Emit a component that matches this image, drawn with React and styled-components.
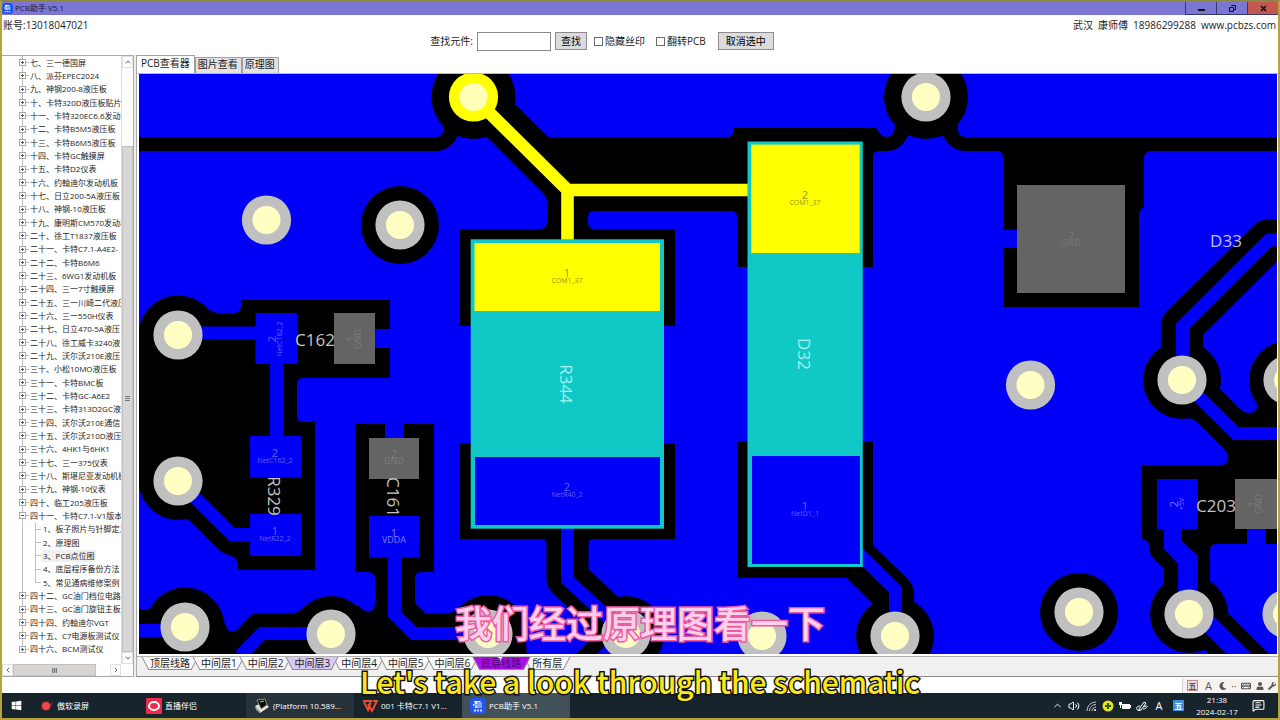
import React, { useState } from 'react'
import styled, { createGlobalStyle, css } from 'styled-components'
import { FaWindows, FaMoon, FaWrench, FaUser, FaKeyboard } from 'react-icons/fa'
import { ChevronUp, ChevronDown, ChevronLeft, ChevronRight, Volume2, MessageSquareText } from 'lucide-react'

const GlobalStyle = createGlobalStyle`
    * { box-sizing: border-box; }
    html, body, #root { height: 100%; margin: 0; }
    body {
        overflow: hidden;
        color: #1c1c1c;
        font-family: "Open Sans", "Noto Sans CJK SC", sans-serif;
        font-size: 10px;
    }
    button, input { font: inherit; color: inherit; }
    button { padding: 0; cursor: pointer; }
`

const Frame = styled.div`
    position: relative;
    height: 100vh;
    display: flex;
    flex-direction: column;
    background: #fff;
    border: 2px solid #b5a43e;
    border-top-color: #8f8644;
`

/* ---------- title bar and header ---------- */

const TitleBar = styled.header`
    display: flex;
    align-items: center;
    height: 13px;
    background: #7a76d2;
    font-size: 8px;
    line-height: 12px;
    color: #1a1838;
`
const AppTitle = styled.h1`
    flex: 1;
    margin: 0 0 0 2px;
    font-size: 8px;
    font-weight: 400;
    line-height: 10px;
    padding-bottom: 2px;
`
const WindowButton = styled.button`
    display: grid;
    place-items: center;
    width: 31px;
    height: 13px;
    border: 0;
    border-left: 1px solid #39366e;
    border-bottom: 1px solid #39366e;
    background: ${(p) => (p.$close ? '#c4574e' : '#7a76d2')};
`
const Header = styled.div`
    height: 40px;
    padding-top: 2px;
`
const InfoRow = styled.div`
    display: flex;
    justify-content: space-between;
    padding: 0 2px 0 1px;
    line-height: 16px;
    white-space: pre;
`
const Contact = styled.span`
    display: flex;
    gap: 5px;
`
const SearchRow = styled.form`
    display: flex;
    justify-content: center;
    align-items: center;
    height: 16px;
    padding-right: 76px;
    line-height: 14px;
`
const SearchInput = styled.input`
    width: 74px;
    height: 19px;
    margin: 0 4px;
    border: 1px solid #8a8a8a;
    background: #fff;
`
const PushButton = styled.button`
    height: 18px;
    padding: 0 ${(p) => p.$pad}px;
    border: 1px solid #8c8c8c;
    background: #dcdcdc;
    line-height: 14px;
    color: #000;
    margin-left: ${(p) => p.$space || 0}px;
`
const CheckLabel = styled.label`
    display: flex;
    align-items: center;
    gap: 2px;
    margin-left: ${(p) => p.$space}px;
    input {
        appearance: none;
        width: 9px;
        height: 9px;
        margin: 0;
        border: 1px solid #6a6a6a;
        background: #fff;
    }
    input:checked { background: #555; }
`

/* ---------- tree ---------- */

const Main = styled.main`
    flex: 1;
    min-height: 0;
    display: flex;
    gap: 2px;
    background: #eee;
`
const TreePanel = styled.nav`
    width: 132px;
    flex: none;
    display: grid;
    grid-template-columns: minmax(0, 1fr) 12px;
    grid-template-rows: minmax(0, 1fr) 12px;
    border: 1px solid #a9a9a9;
    border-left: 0;
    background: #fff;
`
const TreeList = styled.ul`
    display: grid;
    grid-auto-rows: minmax(0, 1fr);
    margin: 0;
    padding: 0 0 8px;
    list-style: none;
    overflow: hidden;
    font-size: 8px;
    white-space: nowrap;
`
const TreeRow = styled.li`
    display: flex;
    align-items: center;
    line-height: 12px;
`
const Rail = styled.span`
    display: flex;
    align-items: center;
    align-self: stretch;
    flex: none;
    width: 28px;
    padding-left: 17px;
    background: linear-gradient(#c0c0c0, #c0c0c0) 20px 0 / 1px ${(p) => (p.$last ? '50%' : '100%')} no-repeat;
    &::after {
        content: '';
        width: 3px;
        border-top: 1px ${(p) => (p.$bare ? 'none' : 'solid')} #c0c0c0;
    }
`
const Toggle = styled.button`
    position: relative;
    width: 7px;
    height: 7px;
    border: 1px solid #a8a8a8;
    background: #fff;
    &::before, &::after {
        content: '';
        position: absolute;
        inset: 2px 1px;
        background: #555;
    }
    &::after {
        inset: 1px 2px;
        display: ${(p) => (p.$open ? 'none' : 'block')};
    }
`
const SubRail = styled.span`
    display: flex;
    align-items: center;
    align-self: stretch;
    flex: none;
    width: 12px;
    padding-left: 5px;
    background: linear-gradient(#c0c0c0, #c0c0c0) 5px 0 / 1px ${(p) => (p.$last ? '50%' : '100%')} no-repeat;
    &::after {
        content: '';
        width: 6px;
        border-top: 1px solid #c0c0c0;
    }
`
const NodeName = styled.span`
    padding: 0 1px 0 ${(p) => (p.$sub ? 1 : 0)}px;
    background: ${(p) => (p.$selected ? '#f0f0f0' : 'none')};
`
const ScrollColumn = styled.div`
    display: flex;
    flex-direction: column;
    border-left: 1px solid #ddd;
`
const ScrollLine = styled.div`
    display: flex;
`
const ArrowButton = styled.button`
    display: grid;
    place-items: center;
    flex: none;
    width: 11px;
    height: 12px;
    border: 1px solid #e0e0e0;
    background: #fdfdfd;
`
const Track = styled.div`
    flex: ${(p) => p.$grow};
    background: #fdfdfd;
`
const Thumb = styled.div`
    flex: ${(p) => p.$grow};
    display: grid;
    place-items: center;
    border: 1px solid #c2c0c0;
    background: #d8d5d5;
`
const Grip = styled.i`
    width: 5px;
    height: 5px;
    ${(p) =>
        p.$across
            ? css`background: repeating-linear-gradient(90deg, #777 0 1px, #b5b5b5 1px 2px);`
            : css`background: repeating-linear-gradient(#777 0 1px, #d8d5d5 1px 2px);`}
`

/* ---------- viewer ---------- */

const Viewer = styled.section`
    flex: 1;
    min-width: 0;
    display: flex;
    flex-direction: column;
    border-left: 1px solid #a9a9a9;
    border-bottom: 1px solid #8c8c8c;
    background: #fff;
`
const ViewTabs = styled.div`
    display: flex;
    align-items: flex-end;
    height: 18px;
`
const ViewTab = styled.button`
    height: ${(p) => (p.$active ? 18 : 16)}px;
    padding: ${(p) => (p.$active ? '0 4px 2px' : '0 3px 2px 2px')};
    border: 1px solid #a0a0a0;
    border-bottom: 0;
    border-left-width: ${(p) => (p.$active ? 0 : 1)}px;
    background: ${(p) => (p.$active ? '#fff' : '#e2e2e2')};
    line-height: 13px;
`
const BoardArea = styled.div`
    flex: 1;
    min-height: 0;
    border-top: 1px solid #b8b8b8;
    padding: 0 1px 0 2px;
`
const BoardSvg = styled.svg`
    display: block;
    width: 100%;
    height: 100%;
    background: #0000f8;
    font-family: "Open Sans", "Noto Sans", sans-serif;
`
const LayerBar = styled.div`
    display: flex;
    align-items: flex-start;
    height: 20px;
    margin-top: 2px;
    padding-left: 5px;
    border-top: 1px solid #b0b0b0;
    background: #f1f0f1;
`
const LayerTab = styled.button`
    position: relative;
    z-index: ${(p) => (p.$color ? 1 : 0)};
    height: 13px;
    padding: 0 8px;
    border: 0;
    background: none;
    line-height: 13px;
    white-space: nowrap;
    color: ${(p) => p.$ink || '#1c1c1c'};
    & + & { margin-left: -5px; }
    &::before, &::after {
        content: '';
        position: absolute;
        z-index: -1;
        top: 0;
        bottom: 0;
        border-bottom: 1px solid #8a8a8a;
        background: ${(p) => p.$color || '#f8f8f8'};
    }
    &::before {
        left: 3px;
        right: 50%;
        border-left: 1px solid #8a8a8a;
        transform: skewX(28deg);
    }
    &::after {
        left: 45%;
        right: 3px;
        border-right: 1px solid #8a8a8a;
        transform: skewX(-28deg);
    }
`

/* ---------- bottom strip and taskbar ---------- */

const BottomStrip = styled.div`
    display: flex;
    justify-content: flex-end;
    height: 16px;
    padding-top: 1px;
`
const ImeBar = styled.div`
    display: flex;
    align-items: center;
    justify-content: space-between;
    width: 96px;
    padding: 0 2px 0 4px;
    border-left: 1px solid #d6d0d0;
    background: #f6f3f3;
    color: #5a5656;
`
const ImeMode = styled.span`
    width: 11px;
    height: 11px;
    border: 1px solid #c08a8a;
    background: #efd9d9;
    font-size: 8px;
    font-weight: 700;
    line-height: 9px;
    text-align: center;
`
const Taskbar = styled.footer`
    display: flex;
    align-items: stretch;
    height: 25px;
    background: #18242b;
    color: #fff;
    font-size: 8px;
`
const StartButton = styled.button`
    display: grid;
    place-items: center;
    width: 28px;
    border: 0;
    background: none;
    color: #fff;
`
const TaskButton = styled.button`
    display: flex;
    align-items: center;
    gap: 3px;
    width: 108px;
    padding-left: 8px;
    border: 0;
    background: ${(p) => p.$bg || 'none'};
    color: #fff;
    white-space: nowrap;
`
const Tray = styled.div`
    display: flex;
    align-items: center;
    gap: 5px;
    margin-left: auto;
    padding-right: 13px;
`
const Clock = styled.time`
    width: 48px;
    margin: 0 6px 0 4px;
    text-align: center;
    line-height: 12px;
`
const InputBadge = styled.span`
    width: 11px;
    height: 11px;
    margin-left: 3px;
    background: #3e90e0;
    line-height: 11px;
    text-align: center;
    font-weight: 700;
`
const LetterA = styled.span`
    width: 12px;
    font-size: 11px;
    line-height: 12px;
    text-align: center;
`

/* subtitles float above the whole window */
const Captions = styled.div`
    position: absolute;
    right: 0;
    bottom: 15px;
    left: 0;
    text-align: center;
    pointer-events: none;
    font-family: "Noto Sans CJK SC", sans-serif;
`
const CaptionMain = styled.p`
    margin: 0 0 7px;
    font-size: 37px;
    font-weight: 500;
    line-height: 60px;
    color: #ffd0ec;
    -webkit-text-stroke: 3px #ee5ba0;
    paint-order: stroke fill;
`
const CaptionSub = styled.p`
    margin: 0;
    font-size: 30px;
    font-weight: 500;
    line-height: 44px;
    color: #f8e71c;
    -webkit-text-stroke: 3px #111;
    paint-order: stroke fill;
`

const treeItems = [
  '七、三一德国屏',
  '八、派芬EPEC2024',
  '九、神钢200-8液压板',
  '十、卡特320D液压板贴片',
  '十一、卡特320EC6.6发动机',
  '十二、卡特B5M5液压板',
  '十三、卡特B6M5液压板',
  '十四、卡特GC触摸屏',
  '十五、卡特D2仪表',
  '十六、约翰迪尔发动机板',
  '十七、日立200-5A液压板',
  '十八、神钢-10液压板',
  '十九、康明斯CM570发动机',
  '二十、徐工T1837液压板',
  '二十一、卡特C7.1-A4E2-',
  '二十二、卡特B6M6',
  '二十三、6WG1发动机板',
  '二十四、三一7寸触摸屏',
  '二十五、三一川崎二代液压',
  '二十六、三一550H仪表',
  '二十七、日立470-5A液压',
  '二十八、徐工威卡3240液',
  '二十九、沃尔沃210E液压',
  '三十、小松10MO液压板',
  '三十一、卡特BMC板',
  '三十二、卡特GC-A6E2',
  '三十三、卡特313D2GC液',
  '三十四、沃尔沃210E通信',
  '三十五、沃尔沃210D液压',
  '三十六、4HK1与6HK1',
  '三十七、三一375仪表',
  '三十八、斯堪尼亚发动机板',
  '三十九、神钢-10仪表',
  '四十、临工205液压板',
  '四十一、卡特C7.1-V1版本',
  '四十二、GC油门档位电路',
  '四十三、GC油门旋钮主板',
  '四十四、约翰迪尔VGT',
  '四十五、C7电源板测试仪',
  '四十六、BCM测试仪',
]

const children = {
  '四十一、卡特C7.1-V1版本': ['1、板子照片与针脚定义', '2、原理图', '3、PCB点位图', '4、底层程序备份方法', '5、常见通病维修案例'],
}

const layers = [
  { name: '顶层线路' },
  { name: '中间层1' },
  { name: '中间层2' },
  { name: '中间层3', color: '#d9c8f4' },
  { name: '中间层4' },
  { name: '中间层5' },
  { name: '中间层6' },
  { name: '底层线路', color: '#a80ee6', ink: '#4a0878' },
  { name: '所有层' },
]

// [x, y, clearance radius]
const vias = [
  [266.5, 220, 0],
  [400, 225, 39],
  [178, 335, 39.5],
  [178, 481, 39],
  [185, 627, 39.5],
  [331, 634, 38],
  [488, 634, 39],
  [626, 634, 38],
  [762, 636, 0],
  [895, 636, 39],
  [926, 97, 42],
  [1030.5, 385, 0],
  [1182, 380, 39],
  [1288, 380, 39],
  [1079, 612, 39],
  [1189, 614, 39],
  [1287, 614, 0],
]

const clearances = [
  // top rail, yellow net and the two upper vias
  'M139 137H438Q444 136 444 126L473 97L517 106L548 137H729Q734 136 734 128H876L881 135Q883 137 887 137Q895 136 895 126H958Q957 136 964 137H1277V151H1150Q1144 152 1144 158V207Q1139 210 1139 216V307H1003V248H1017V230H1003V158Q1003 151 997 151H964Q950 150 943 135H908Q902 150 888 151H879Q873 151 873 157V267H737V217Q737 211 731 211H594Q588 211 588 217V223Q588 229 594 229H675V326H460V229H540Q547 229 547 222V200Q546 196 543 193L490 140Q485 135 479 135H458Q451 150 437 151H139Z',
  'M460 443H675V539H594Q588 539 588 545V572H547V545Q547 539 541 539H460Z',
  'M737 441H873V546L853 578H737Z',
  // C162 and R329
  'M139 335L178 298L203 304Q209 312 218 313H235Q241 312 241 306V300H390V329H375V348H390V378H303Q297 378 297 384V416Q297 422 303 422H315V570H237V562Q236 557 229 555Q222 553 218 549L192 523Q189 519 184 519L139 490Z',
  // C161 and the lower left corner
  'M139 610H146Q152 609 155 603L185 595L222 612Q225 631 232 632Q237 631 240 627L249 617Q253 613 258 613H294Q300 612 305 606H359Q365 612 368 612Q374 611 375 604V580Q375 572 368 572H355V424H385V438H404V424H434V572H421Q415 572 415 578V603L425 613H449Q456 612 460 606L488 600L525 630L527 656H139Z',
  // D33 side and C203
  'M1142 465H1222Q1228 464 1228 458Q1228 453 1224 449L1196 421Q1193 419 1188 418L1182 380L1220 389L1240 409Q1244 413 1250 413Q1258 412 1257 403L1288 380V544H1266V529H1247V544H1216Q1210 544 1210 551V582L1222 593L1189 614L1158 592Q1164 588 1164 582V569L1153 558Q1149 553 1149 546Q1149 540 1142 539Z',
]

const PadText = ({ x, y, pin, net, fill, turn, small = 7 }) => (
  <g transform={`translate(${x} ${y})${turn ? ` rotate(${turn})` : ''}`} fill={fill} textAnchor="middle">
    <text y="0" fontSize="11">{pin}</text>
    <text y="6" fontSize={small}>{net}</text>
  </g>
)

const RefText = ({ x, y, children: label, turn = 0, fill = '#c4c4c4' }) => (
  <text transform={`translate(${x} ${y}) rotate(${turn})`} fill={fill} fontSize="17" textAnchor="middle" dominantBaseline="central">
    {label}
  </text>
)

const Board = () => (
  <BoardSvg viewBox="139 74 1138 580" preserveAspectRatio="xMidYMid slice" role="img" aria-label="PCB">
    <g fill="#000">
      {clearances.map((d) => <path key={d} d={d} />)}
      {vias.map(([x, y, r]) => <circle key={`${x}-${y}`} cx={x} cy={y} r={r} />)}
      <circle cx="473.5" cy="97" r="42" />
    </g>

    <g fill="none" stroke="#000" strokeWidth="42">
      <path d="M567.5 528V578L626 634L590 670" strokeLinejoin="round" />
      <path d="M855 557L893 594V636" strokeLinejoin="round" />
      <path d="M1189 604L1269 684" />
      <path d="M1182 380V326L1269 240H1290" strokeLinejoin="round" />
    </g>

    <g fill="none" stroke="#0000f8" strokeWidth="13">
      <path d="M567.5 520V580L626 634L590 670" />
      <path d="M855 550L895.5 590V636" />
      <path d="M1189 604L1269 684" strokeWidth="18" />
      <path d="M1182.5 380V326L1269 240H1290" />
      <path d="M1182 380L1236 433.5H1290" />
      <path d="M178 333H256M276.5 360V440M178 481L232 534.5H252" />
      <path d="M139 630.5H185M331 633.5H262L240 656" />
      <path d="M394.5 550V614L414 633.5H488" />
    </g>

    <g fill="#0000f8">
      <path d="M1164 525H1182V541L1198 556V600H1178V564L1164 549Z" />
      <path d="M255.5 313H297.5V364H255.5ZM250 436H301V477.5H250ZM250 514H301V556H250ZM369 516H419V557.5H369ZM1157 479H1198V529H1157Z" />
    </g>
    <path fill="#646464" d="M334 313H375V364H334ZM369 438H419V479H369ZM1017 185H1125V293H1017ZM1235 479H1277V529H1235Z" />

    {vias.map(([x, y]) => (
      <g key={`${x}-${y}`}>
        <circle cx={x} cy={y} r="24.6" fill="#c0c0c0" />
        <circle cx={x} cy={y} r="14" fill="#ffffc4" />
      </g>
    ))}

    <path d="M473.5 97L567.5 190H752M567.5 187V244" fill="none" stroke="#ff0" strokeWidth="12.6" />
    <circle cx="473.5" cy="97" r="24.6" fill="#ff0" />
    <circle cx="473.5" cy="97" r="14" fill="#ffffb8" />

    <rect x="470.7" y="239.3" width="193.3" height="289.4" fill="#10c8c6" />
    <rect x="474.5" y="243" width="185.5" height="68" fill="#ff0" />
    <rect x="475" y="457" width="185" height="68" fill="#0000f8" />
    <rect x="747.5" y="141.5" width="115.3" height="425.5" fill="#10c8c6" />
    <rect x="751.3" y="144.6" width="108.4" height="108.4" fill="#ff0" />
    <rect x="752" y="456" width="108" height="108" fill="#0000f8" />

    <PadText x={567} y={277} pin="1" net="COM1_37" fill="#98980c" />
    <PadText x={567} y={491} pin="2" net="NetR40_2" fill="#6464f4" />
    <PadText x={805} y={199} pin="2" net="COM1_37" fill="#98980c" />
    <PadText x={805} y={510} pin="1" net="NetD1_1" fill="#6464f4" />
    <PadText x={275} y={457} pin="2" net="NetC162_2" fill="#6464f4" />
    <PadText x={275} y={535} pin="1" net="NetR22_2" fill="#6464f4" />
    <PadText x={394} y={537} pin="1" net="VDDA" fill="#7c7cf8" small={9} />
    <PadText x={394} y={458} pin="2" net="GND" fill="#7c7c7c" small={9} />
    <PadText x={1071} y={240} pin="2" net="GND" fill="#767676" small={9} />
    <PadText x={276} y={339} pin="2" net="NetC162_2" fill="#6464f4" turn={-90} />
    <PadText x={355} y={339} pin="1" net="GND" fill="#7c7c7c" turn={-90} small={9} />
    <PadText x={1178} y={504} pin="2" net="+5V" fill="#7c7cf8" turn={-90} />
    <PadText x={1256} y={504} pin="1" net="GND" fill="#7c7c7c" turn={-90} small={9} />

    <RefText x={315} y={339}>C162</RefText>
    <RefText x={274} y={496} turn={90}>R329</RefText>
    <RefText x={393} y={497} turn={90}>C161</RefText>
    <RefText x={566} y={384} turn={90} fill="#a4f0f0">R344</RefText>
    <RefText x={804} y={354} turn={90} fill="#a4f0f0">D32</RefText>
    <RefText x={1226} y={240} fill="#c0c0f4">D33</RefText>
    <RefText x={1216} y={505}>C203</RefText>
  </BoardSvg>
)

const AppIcon = ({ size }) => (
  <svg width={size} height={size} viewBox="0 0 16 16" aria-hidden="true">
    <rect width="16" height="16" rx="4" fill="#2257ee" />
    <path d="M4 3h6l2 2v5H5V8H3V6h2z" fill="#e8f2ff" />
    <path d="M7 5h5M4 7h8M7 9h6" stroke="#2257ee" />
    <path d="M4 12.5h8" stroke="#cfe0ff" strokeWidth="2" strokeDasharray="2 1" />
  </svg>
)

const taskItems = [
  {
    name: '傲软录屏',
    icon: (
      <svg width="16" height="16" viewBox="0 0 16 16">
        <circle cx="8" cy="8" r="5" fill="#6f1d22" />
        <circle cx="8" cy="8" r="4" fill="#f0484a" />
        <path d="M12 7l3-4-2 6z" fill="#b32d30" />
      </svg>
    ),
  },
  {
    name: '直播伴侣',
    icon: (
      <svg width="16" height="16" viewBox="0 0 16 16">
        <rect width="16" height="16" rx="1" fill="#ee2b4e" />
        <ellipse cx="8" cy="8" rx="5" ry="4" fill="none" stroke="#fff" strokeWidth="2" />
      </svg>
    ),
  },
  {
    name: '(Platform 10.589...',
    bg: '#27323a',
    icon: (
      <svg width="16" height="16" viewBox="0 0 16 16">
        <path d="M1 8l9-4 5 5-9 6z" fill="#e4e4e0" />
        <path d="M3 2l8-1 2 6-6 4z" fill="#0b0d0c" stroke="#a9a996" strokeWidth="0.8" />
        <path d="M1 8l5 5v2l-4-3z" fill="#9c9c98" />
        <path d="M6 4l4-1" stroke="#b5c46c" />
      </svg>
    ),
  },
  {
    name: '001 卡特C7.1 V1...',
    icon: (
      <svg width="16" height="16" viewBox="0 0 16 16" fill="none" stroke="#f04a2c" strokeWidth="2">
        <path d="M1 3h8l-3 9L2 4M6 6l4 7 5-10h-4" />
      </svg>
    ),
  },
  { name: 'PCB助手 V5.1', bg: '#42505a', icon: <AppIcon size={16} /> },
]

const Tree = () => {
  const [open, setOpen] = useState({ '四十一、卡特C7.1-V1版本': true })
  return (
    <TreePanel>
      <TreeList>
        {treeItems.map((name, i) => (
          <React.Fragment key={name}>
            <TreeRow>
              <Rail $last={i === treeItems.length - 1}>
                <Toggle
                  $open={open[name]}
                  aria-label={name}
                  aria-expanded={!!open[name]}
                  onClick={() => setOpen({ ...open, [name]: !open[name] })}
                />
              </Rail>
              <NodeName>{name}</NodeName>
            </TreeRow>
            {open[name] && (children[name] || []).map((sub, j, all) => (
              <TreeRow key={sub}>
                <Rail $bare />
                <SubRail $last={j === all.length - 1} />
                <NodeName $sub $selected={j === 2}>{sub}</NodeName>
              </TreeRow>
            ))}
          </React.Fragment>
        ))}
      </TreeList>
      <ScrollColumn>
        <ArrowButton aria-label="向上"><ChevronUp size={8} /></ArrowButton>
        <Track $grow={78} />
        <Thumb $grow={506}><Grip /></Thumb>
        <ArrowButton aria-label="向下"><ChevronDown size={8} /></ArrowButton>
      </ScrollColumn>
      <ScrollLine>
        <ArrowButton aria-label="向左"><ChevronLeft size={8} /></ArrowButton>
        <Thumb $grow={84}><Grip $across /></Thumb>
        <Track $grow={14} />
        <ArrowButton aria-label="向右"><ChevronRight size={8} /></ArrowButton>
      </ScrollLine>
    </TreePanel>
  )
}

const App = () => {
  return (
    <Frame>
      <GlobalStyle />
      <TitleBar>
        <AppIcon size={11} />
        <AppTitle>PCB助手 V5.1</AppTitle>
        <WindowButton aria-label="最小化">
          <svg width="9" height="9" viewBox="0 0 9 9"><path d="M1 6h7" stroke="#111" strokeWidth="2" /></svg>
        </WindowButton>
        <WindowButton aria-label="还原">
          <svg width="9" height="9" viewBox="0 0 9 9" fill="none" stroke="#111"><path d="M3.5 2V1.5h4v4H6M1.5 3.5h4v4h-4z" /></svg>
        </WindowButton>
        <WindowButton $close aria-label="关闭">
          <svg width="9" height="9" viewBox="0 0 9 9"><path d="M2 2l5 5M7 2L2 7" stroke="#111" strokeWidth="1.6" /></svg>
        </WindowButton>
      </TitleBar>

      <Header>
        <InfoRow>
          <span>账号:13018047021</span>
          <Contact>
            <span>武汉</span>
            <span>康师傅</span>
            <span>18986299288</span>
            <span>www.pcbzs.com</span>
          </Contact>
        </InfoRow>
        <SearchRow onSubmit={(e) => e.preventDefault()}>
          <label htmlFor="part">查找元件:</label>
          <SearchInput id="part" type="text" />
          <PushButton type="submit" $pad={5}>查找</PushButton>
          <CheckLabel $space={7}><input type="checkbox" />隐藏丝印</CheckLabel>
          <CheckLabel $space={11}><input type="checkbox" />翻转PCB</CheckLabel>
          <PushButton type="button" $pad={7} $space={12}>取消选中</PushButton>
        </SearchRow>
      </Header>

      <Main>
        <Tree />
        <Viewer>
          <ViewTabs>
            <ViewTab $active>PCB查看器</ViewTab>
            <ViewTab>图片查看</ViewTab>
            <ViewTab>原理图</ViewTab>
          </ViewTabs>
          <BoardArea>
            <Board />
          </BoardArea>
          <LayerBar>
            {layers.map((l) => (
              <LayerTab key={l.name} $color={l.color} $ink={l.ink}>{l.name}</LayerTab>
            ))}
          </LayerBar>
        </Viewer>
      </Main>

      <BottomStrip>
        <ImeBar>
          <ImeMode>五</ImeMode>
          <LetterA>A</LetterA>
          <FaMoon size={8} />
          <span>··</span>
          <FaKeyboard size={10} />
          <FaUser size={8} />
          <FaWrench size={8} />
        </ImeBar>
      </BottomStrip>

      <Taskbar>
        <StartButton aria-label="开始"><FaWindows size={11} /></StartButton>
        {taskItems.map((t) => (
          <TaskButton key={t.name} $bg={t.bg}>{t.icon}{t.name}</TaskButton>
        ))}
        <Tray>
          <ChevronUp size={11} />
          <Volume2 size={12} />
          <svg width="12" height="12" viewBox="0 0 12 12" fill="none" stroke="#c8ccce">
            <path d="M2 11C2 6 6 2 11 2M4.500 11C4.500 7.500 7.500 4.500 11 4.500M7 11c0-2 2-4 4-4" />
            <circle cx="10" cy="10" r="1" fill="#fff" stroke="none" />
          </svg>
          <svg width="12" height="12" viewBox="0 0 12 12">
            <circle cx="6" cy="6" r="5.5" fill="#e8e41c" />
            <path d="M6 3v6M3 6h6" stroke="#2a5a1a" strokeWidth="2" />
          </svg>
          <svg width="12" height="12" viewBox="0 0 12 12" fill="#fff">
            <path d="M3 4h8v5H3zM11 5h1v3h-1zM0 2h3v3H2v3H1V5H0z" />
          </svg>
          <svg width="12" height="12" viewBox="0 0 12 12" fill="none" stroke="#fff">
            <path d="M3 9l5-7 2 1-5 7-2 .5zM4 6C1 6 0 8 1 9.500s3 1 4 0M8 7c2-2 4-1 3 0s-2 2-4 2" />
          </svg>
          <LetterA>A</LetterA>
          <InputBadge>五</InputBadge>
          <Clock>21:38<br />2024-02-17</Clock>
          <MessageSquareText size={13} />
        </Tray>
      </Taskbar>

      <Captions>
        <CaptionMain>我们经过原理图看一下</CaptionMain>
        <CaptionSub>Let's take a look through the schematic</CaptionSub>
      </Captions>
    </Frame>
  )
}

export default App
